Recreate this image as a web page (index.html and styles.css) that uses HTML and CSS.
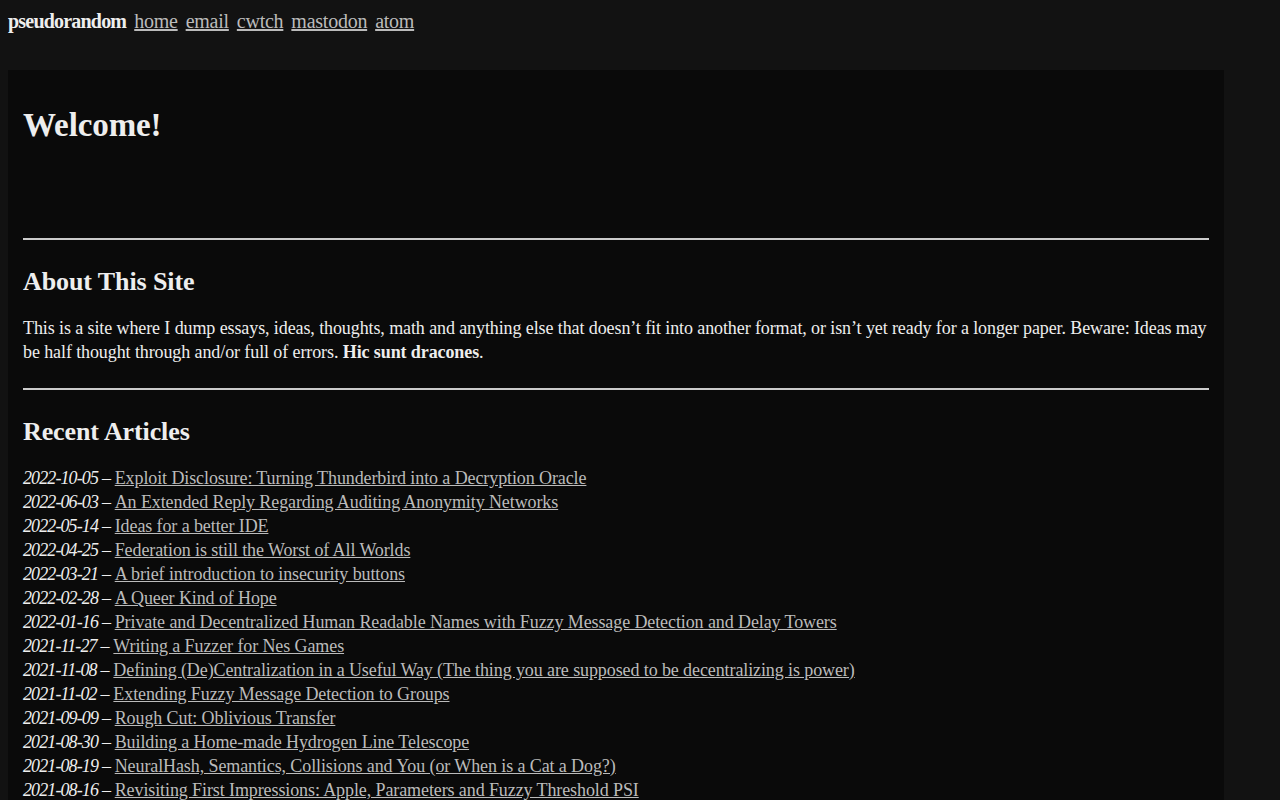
FILE: index.html
```html
<html>

<head>
    <title>pseudorandom</title>
    <link rel="stylesheet" href="styles.css">
</head>

<body>
    <header class="topbar">
        <strong class="brand">pseudorandom</strong>
        <a href="#">home</a>
        <a href="#">email</a>
        <a href="#">cwtch</a>
        <a href="#">mastodon</a>
        <a href="#">atom</a>
    </header>
    <main class="page">
        <h1>Welcome!</h1>
        <hr>
        <h2>About This Site</h2>
        <p>This is a site where I dump essays, ideas, thoughts, math and anything else that doesn’t fit into another format, or isn’t yet ready for a longer paper. Beware: Ideas may be half thought through and/or full of errors. <strong>Hic sunt dracones</strong>.</p>
        <hr>
        <h2>Recent Articles</h2>
        <ul class="articles">
            <li><em>2022-10-05</em> – <a href="#">Exploit Disclosure: Turning Thunderbird into a Decryption Oracle</a></li>
            <li><em>2022-06-03</em> – <a href="#">An Extended Reply Regarding Auditing Anonymity Networks</a></li>
            <li><em>2022-05-14</em> – <a href="#">Ideas for a better IDE</a></li>
            <li><em>2022-04-25</em> – <a href="#">Federation is still the Worst of All Worlds</a></li>
            <li><em>2022-03-21</em> – <a href="#">A brief introduction to insecurity buttons</a></li>
            <li><em>2022-02-28</em> – <a href="#">A Queer Kind of Hope</a></li>
            <li><em>2022-01-16</em> – <a href="#">Private and Decentralized Human Readable Names with Fuzzy Message Detection and Delay Towers</a></li>
            <li><em>2021-11-27</em> – <a href="#">Writing a Fuzzer for Nes Games</a></li>
            <li><em>2021-11-08</em> – <a href="#">Defining (De)Centralization in a Useful Way (The thing you are supposed to be decentralizing is power)</a></li>
            <li><em>2021-11-02</em> – <a href="#">Extending Fuzzy Message Detection to Groups</a></li>
            <li><em>2021-09-09</em> – <a href="#">Rough Cut: Oblivious Transfer</a></li>
            <li><em>2021-08-30</em> – <a href="#">Building a Home-made Hydrogen Line Telescope</a></li>
            <li><em>2021-08-19</em> – <a href="#">NeuralHash, Semantics, Collisions and You (or When is a Cat a Dog?)</a></li>
            <li><em>2021-08-16</em> – <a href="#">Revisiting First Impressions: Apple, Parameters and Fuzzy Threshold PSI</a></li>
        </ul>
    </main>
</body>

</html>
```

FILE: styles.css
```css
body {
    margin: 0;
    padding: 0 8px 40px;
    background: #121212;
    color: #eeeeee;
    font-family: "Liberation Serif", serif;
    font-size: 18px;
    line-height: 24px;
    letter-spacing: -0.1px;
}

a {
    color: #bbbbbb;
}

.topbar {
    display: flex;
    align-items: baseline;
    gap: 8px;
    height: 70px;
    padding-top: 9px;
    box-sizing: border-box;
    font-size: 20px;
    letter-spacing: -0.25px;
}

.brand {
    color: #eeeeee;
    letter-spacing: -0.8px;
}

.page {
    width: 1186px;
    padding: 15px;
    background: #0a0a0a;
}

.page h1 {
    margin: 18px 0 91px;
    font-size: 33px;
    line-height: 44px;
}

.page h2 {
    margin: 26px 0 18px;
    font-size: 26px;
    line-height: 32px;
}

.page p {
    margin: 0 0 24px;
}

hr {
    margin: 0;
    border: 0;
    border-top: 2px solid #cccccc;
}

.articles {
    margin: 0;
    padding: 0;
    word-spacing: -0.5px;
}

.articles li {
    list-style: none;
}

.articles em {
    letter-spacing: -0.9px;
}

.articles a {
    word-spacing: 0;
}
```
